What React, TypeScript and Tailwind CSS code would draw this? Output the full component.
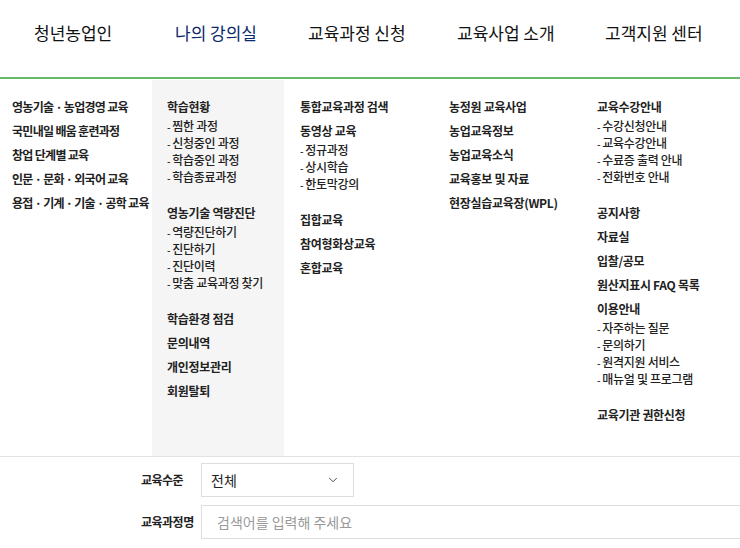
import { ChevronDown } from "lucide-react";

type Item = { label: string; subs?: string[] };

const font = { fontFamily: '"Noto Sans CJK KR", "Noto Sans", sans-serif' };

const navs = ["청년농업인", "나의 강의실", "교육과정 신청", "교육사업 소개", "고객지원 센터"];

const columns: Item[][] = [
	[
		{ label: "영농기술 · 농업경영 교육" },
		{ label: "국민내일 배움 훈련과정" },
		{ label: "창업 단계별 교육" },
		{ label: "인문 · 문화 · 외국어 교육" },
		{ label: "용접 · 기계 · 기술 · 공학 교육" },
	],
	[
		{ label: "학습현황", subs: ["찜한 과정", "신청중인 과정", "학습중인 과정", "학습종료과정"] },
		{ label: "영농기술 역량진단", subs: ["역량진단하기", "진단하기", "진단이력", "맞춤 교육과정 찾기"] },
		{ label: "학습환경 점검" },
		{ label: "문의내역" },
		{ label: "개인정보관리" },
		{ label: "회원탈퇴" },
	],
	[
		{ label: "통합교육과정 검색" },
		{ label: "동영상 교육", subs: ["정규과정", "상시학습", "한토막강의"] },
		{ label: "집합교육" },
		{ label: "참여형화상교육" },
		{ label: "혼합교육" },
	],
	[
		{ label: "농정원 교육사업" },
		{ label: "농업교육정보" },
		{ label: "농업교육소식" },
		{ label: "교육홍보 및 자료" },
		{ label: "현장실습교육장(WPL)" },
	],
	[
		{ label: "교육수강안내", subs: ["수강신청안내", "교육수강안내", "수료증 출력 안내", "전화번호 안내"] },
		{ label: "공지사항" },
		{ label: "자료실" },
		{ label: "입찰/공모" },
		{ label: "원산지표시 FAQ 목록" },
		{ label: "이용안내", subs: ["자주하는 질문", "문의하기", "원격지원 서비스", "매뉴얼 및 프로그램"] },
		{ label: "교육기관 권한신청" },
	],
];

const colClass = [
	"w-[152px] pl-3 tracking-[-0.7px]",
	"w-[132px] pl-[15px] bg-[#f5f5f5] tracking-[-0.3px]",
	"w-[149px] pl-4 tracking-[-0.3px]",
	"w-[148px] pl-4 tracking-[-0.3px]",
	"flex-1 pl-4 tracking-[-0.3px]",
];

const navClass = ["w-[152px] pl-[34px]", "w-[132px] pl-[23px]", "w-[149px] pl-6", "w-[148px] pl-6", "flex-1 pl-6"];

function MenuColumn({ items }: { items: Item[] }) {
	return (
		<ul className="flex flex-col">
			{items.map((it) => (
				<li key={it.label} className={it.subs ? "pb-4" : ""}>
					<div className="h-6 leading-6 text-[12px] font-bold text-[#222] whitespace-nowrap">{it.label}</div>
					{it.subs && (
						<ul className="-mt-[2px]">
							{it.subs.map((s) => (
								<li key={s} className="h-[17px] leading-[17px] text-[12px] font-medium text-[#222] whitespace-nowrap">
									<span className="text-[10px] mr-[2px]">-</span>
									{s}
								</li>
							))}
						</ul>
					)}
				</li>
			))}
		</ul>
	);
}

export default function App() {
	return (
		<div className="w-[740px] h-[548px] overflow-hidden bg-white" style={font}>
			<nav className="flex h-[79px] border-b-2 border-[#66bb6a]">
				{navs.map((n, i) => (
					<div key={n} className={`${navClass[i]} pt-[21px]`}>
						<span className={`text-[17px] leading-6 whitespace-nowrap ${i === 1 ? "text-[#0b2a6b]" : "text-[#111]"}`}>{n}</span>
					</div>
				))}
			</nav>

			<div className="flex h-[378px] pt-px border-b border-[#e2e2e2]">
				{columns.map((c, i) => (
					<div key={i} className={`${colClass[i]} pt-[15px]`}>
						<MenuColumn items={c} />
					</div>
				))}
			</div>

			<div className="flex flex-col gap-2 pt-[6px] pl-[141px]">
				<div className="flex items-center">
					<label className="w-[60px] text-[12px] font-bold text-[#222] tracking-[-0.5px]">교육수준</label>
					<div className="w-[153px] h-[34px] border border-[#dedede] flex items-center justify-between pl-[9px] pr-[13px]">
						<span className="text-[14px] text-[#222]">전체</span>
						<ChevronDown size={14} strokeWidth={1.5} className="text-[#333]" />
					</div>
				</div>
				<div className="flex items-center">
					<label className="w-[60px] text-[12px] font-bold text-[#222] tracking-[-0.5px]">교육과정명</label>
					<input
						placeholder="검색어를 입력해 주세요"
						className="flex-1 h-[34px] border border-[#dedede] border-r-0 pl-[15px] text-[14px] placeholder:text-[#999] outline-none"
					/>
				</div>
			</div>
		</div>
	);
}
